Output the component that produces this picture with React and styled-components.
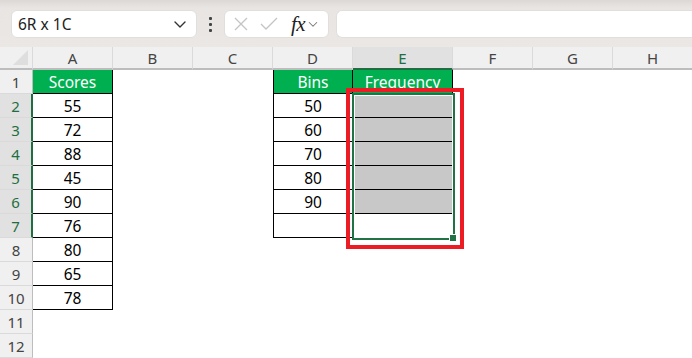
import React from "react";
import styled, { createGlobalStyle } from "styled-components";

const GlobalStyle = createGlobalStyle`
  html, body {
    margin: 0;
    padding: 0;
    background: #ffffff;
    overflow: hidden;
  }
  body {
    font-family: "Noto Sans", "Open Sans", sans-serif;
  }
`;

const Page = styled.div`
  width: 692px;
  height: 358px;
  overflow: hidden;
  background: #fff;
`;

const Toolbar = styled.div`
  height: 47px;
  box-sizing: border-box;
  padding: 10px 0 9px 11px;
  display: flex;
  align-items: stretch;
  background: linear-gradient(#dcd8d6 0px, #e9e5e3 8px, #ebe7e5 100%);
`;

const NameBox = styled.div`
  width: 186px;
  box-sizing: border-box;
  background: #fff;
  border-radius: 6px;
  border: 1px solid #e2dedc;
  display: flex;
  align-items: center;
  justify-content: space-between;
  padding: 0 8px 0 6px;
  font-size: 15.5px;
  color: #222;
`;

const Dots = styled.div`
  width: 27px;
  display: flex;
  flex-direction: column;
  align-items: center;
  justify-content: center;
  gap: 3px;

  span {
    width: 3px;
    height: 3px;
    background: #444;
    border-radius: 1px;
  }
`;

const FormulaButtons = styled.div`
  width: 105px;
  box-sizing: border-box;
  background: #fff;
  border-radius: 6px;
  border: 1px solid #e2dedc;
  display: flex;
  align-items: center;
  padding: 0 6px 0 7px;
`;

const Fx = styled.span`
  font-family: "Liberation Serif", "DejaVu Serif", serif;
  font-style: italic;
  font-size: 21px;
  color: #222;
  margin-left: 11px;
  margin-right: 2px;
  letter-spacing: -0.5px;
`;

const FormulaInput = styled.div`
  flex: 1;
  margin-left: 7px;
  background: #fff;
  border-radius: 6px 0 0 6px;
  border: 1px solid #e2dedc;
  border-right: none;
`;

const SheetArea = styled.div`
  position: relative;
`;

const Grid = styled.div`
  display: grid;
  grid-template-columns: 33px 80px 80px 80px 80px 100px 80px 80px 80px;
  grid-template-rows: 23px;
  grid-auto-rows: 24px;
`;

const ColHead = styled.div`
  box-sizing: border-box;
  display: flex;
  align-items: center;
  justify-content: center;
  font-size: 15px;
  background: ${(p) => (p.$active ? "#e1e1e1" : "#f0f0f0")};
  color: ${(p) => (p.$active ? "#1e6e42" : "#444")};
  border-right: 1px solid #dadada;
  border-bottom: ${(p) => (p.$active ? "2px solid #1e6e42" : "2px solid #bdbdbd")};
`;

const Corner = styled.div`
  box-sizing: border-box;
  background: #f0f0f0;
  border-right: 1px solid #dadada;
  border-bottom: 2px solid #bdbdbd;
  position: relative;

  &::after {
    content: "";
    position: absolute;
    right: 4px;
    bottom: 3px;
    width: 0;
    height: 0;
    border-left: 15px solid transparent;
    border-bottom: 15px solid #dedede;
  }
`;

const RowHead = styled.div`
  box-sizing: border-box;
  display: flex;
  align-items: center;
  justify-content: center;
  font-size: 15px;
  background: ${(p) => (p.$active ? "#e1e1e1" : "#f0f0f0")};
  color: ${(p) => (p.$active ? "#1e6e42" : "#444")};
  border-bottom: 1px solid #dadada;
  border-right: ${(p) => (p.$active ? "2px solid #1e6e42" : "1px solid #bdbdbd")};
`;

const Cell = styled.div`
  box-sizing: border-box;
  display: flex;
  align-items: center;
  justify-content: center;
  font-size: 15.5px;
  color: #000;
  background: ${(p) =>
    p.$kind === "head" ? "#00b050" : p.$kind === "fill" ? "#c8c8c8" : "#fff"};
  ${(p) => p.$kind === "head" && "color: #fff;"}
  ${(p) => p.$box && "border-right: 1px solid #000; border-bottom: 1px solid #000;"}
  ${(p) => p.$left && "border-left: 1px solid #000;"}
`;

const Selection = styled.div`
  position: absolute;
  left: 352px;
  top: 46px;
  width: 103px;
  height: 147px;
  box-sizing: border-box;
  border: 2px solid #217346;
  box-shadow: inset 0 0 0 1px #fff;
  pointer-events: none;
`;

const FillHandle = styled.div`
  position: absolute;
  right: -4px;
  bottom: -4px;
  width: 6px;
  height: 6px;
  background: #217346;
  border: 1px solid #fff;
`;

const Callout = styled.div`
  position: absolute;
  left: 346px;
  top: 41px;
  width: 118px;
  height: 161px;
  box-sizing: border-box;
  border: 4px solid #ed1c24;
  pointer-events: none;
`;

const columns = ["A", "B", "C", "D", "E", "F", "G", "H"];
const scores = ["Scores", "55", "72", "88", "45", "90", "76", "80", "65", "78", "", ""];
const bins = ["Bins", "50", "60", "70", "80", "90", ""];

const Chevron = ({ size = 14, color = "#333" }) => (
  <svg width={size} height={size} viewBox="0 0 16 16">
    <path d="M3 6l5 5 5-5" fill="none" stroke={color} strokeWidth="1.4" strokeLinecap="round" strokeLinejoin="round" />
  </svg>
);

const rowCells = (r) => {
  const row = r + 1;
  const inD = row <= 7;
  let eKind = "plain";
  if (row === 1) eKind = "head";
  else if (row >= 2 && row <= 6) eKind = "fill";

  return [
    <Cell key="A" $kind={row === 1 ? "head" : "plain"} $box={row <= 10}>
      {scores[r]}
    </Cell>,
    <Cell key="B" />,
    <Cell key="C" />,
    <Cell key="D" $kind={row === 1 ? "head" : "plain"} $box={inD} $left={inD}>
      {inD ? bins[r] : ""}
    </Cell>,
    <Cell key="E" $kind={eKind} $box={row <= 7}>
      {row === 1 ? "Frequency" : ""}
    </Cell>,
    <Cell key="F" />,
    <Cell key="G" />,
    <Cell key="H" />,
  ];
};

export default function App() {
  return (
    <Page>
      <GlobalStyle />
      <Toolbar>
        <NameBox>
          <span>6R x 1C</span>
          <Chevron size={16} />
        </NameBox>
        <Dots>
          <span />
          <span />
          <span />
        </Dots>
        <FormulaButtons>
          <svg width="18" height="18" viewBox="0 0 18 18">
            <path d="M3 3l12 12M15 3L3 15" stroke="#c4c4c4" strokeWidth="1.3" />
          </svg>
          <svg width="22" height="18" viewBox="0 0 22 18" style={{ marginLeft: 8 }}>
            <path d="M3 9l5 5L19 3" fill="none" stroke="#c4c4c4" strokeWidth="1.3" />
          </svg>
          <Fx>fx</Fx>
          <Chevron size={12} color="#777" />
        </FormulaButtons>
        <FormulaInput />
      </Toolbar>
      <SheetArea>
        <Grid>
          <Corner />
          {columns.map((c) => (
            <ColHead key={c} $active={c === "E"}>
              {c}
            </ColHead>
          ))}
          {Array.from({ length: 12 }, (_, r) => (
            <React.Fragment key={r}>
              <RowHead $active={r + 1 >= 2 && r + 1 <= 7}>{r + 1}</RowHead>
              {rowCells(r)}
            </React.Fragment>
          ))}
        </Grid>
        <Selection>
          <FillHandle />
        </Selection>
        <Callout />
      </SheetArea>
    </Page>
  );
}
